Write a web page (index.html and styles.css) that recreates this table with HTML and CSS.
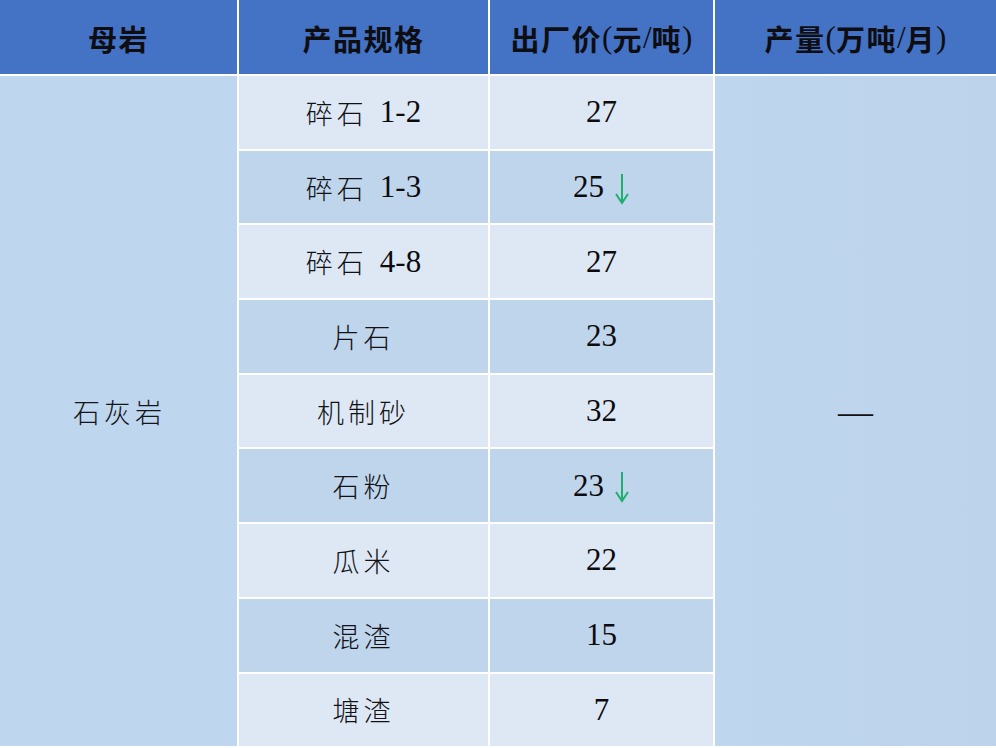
FILE: index.html
```html
<!DOCTYPE html>
<html lang="zh-CN">
<head>
<meta charset="utf-8">
<title>石灰岩价格表</title>
<link rel="stylesheet" href="styles.css">
</head>
<body>
<div class="table">
  <div class="th">母岩</div>
  <div class="th">产品规格</div>
  <div class="th">出厂价<span class="lat">(</span>元<span class="lat">/</span>吨<span class="lat">)</span></div>
  <div class="th">产量<span class="lat">(</span>万吨<span class="lat">/</span>月<span class="lat">)</span></div>

  <div class="side rock">石灰岩</div>

  <div class="td light spec">碎石<span class="num">1-2</span></div>
  <div class="td light price"><span class="num">27</span></div>

  <div class="td dark spec">碎石<span class="num">1-3</span></div>
  <div class="td dark price"><span class="num">25</span><svg class="down" viewBox="0 0 16 32" width="16" height="32"><path d="M8 1 V29" stroke="#1fae6e" stroke-width="2" fill="none"/><path d="M2 21 L8 30 L14 21" stroke="#1fae6e" stroke-width="2" fill="none"/></svg></div>

  <div class="td light spec">碎石<span class="num">4-8</span></div>
  <div class="td light price"><span class="num">27</span></div>

  <div class="td dark spec">片石</div>
  <div class="td dark price"><span class="num">23</span></div>

  <div class="td light spec">机制砂</div>
  <div class="td light price"><span class="num">32</span></div>

  <div class="td dark spec">石粉</div>
  <div class="td dark price"><span class="num">23</span><svg class="down" viewBox="0 0 16 32" width="16" height="32"><path d="M8 1 V29" stroke="#1fae6e" stroke-width="2" fill="none"/><path d="M2 21 L8 30 L14 21" stroke="#1fae6e" stroke-width="2" fill="none"/></svg></div>

  <div class="td light spec">瓜米</div>
  <div class="td light price"><span class="num">22</span></div>

  <div class="td dark spec">混渣</div>
  <div class="td dark price"><span class="num">15</span></div>

  <div class="td light spec">塘渣</div>
  <div class="td light price"><span class="num">7</span></div>

  <div class="side output"><span class="dash">—</span></div>
</div>
</body>
</html>
```

FILE: styles.css
```css
html, body {
  margin: 0;
  padding: 0;
  background: #ffffff;
}

body {
  width: 996px;
  height: 748px;
  overflow: hidden;
}

.table {
  display: grid;
  grid-template-columns: 237px 249px 223px 281px;
  grid-template-rows: 74px repeat(9, 72.7px);
  column-gap: 2px;
  row-gap: 2px;
  width: 996px;
  background: #ffffff;
}

.th {
  background: #4472c4;
  color: #0d0d12;
  font-family: "Noto Sans CJK SC", "Noto Sans", sans-serif;
  font-weight: 700;
  font-size: 29px;
  letter-spacing: 1.5px;
  display: flex;
  align-items: center;
  justify-content: center;
  padding-top: 1px;
}

.th .lat {
  font-family: "Liberation Serif", serif;
  font-weight: 400;
  font-size: 31px;
  letter-spacing: 0;
}

.side {
  grid-row: 2 / span 9;
  display: flex;
  align-items: center;
  justify-content: center;
  background: #bed6ee;
}

.rock {
  grid-column: 1;
  font-family: "Noto Sans CJK SC", sans-serif;
  font-weight: 300;
  font-size: 27px;
  letter-spacing: 4px;
  color: #15151a;
  padding-left: 2px;
}

.output {
  grid-column: 4;
  background: linear-gradient(90deg, #bed6ee 0%, #bdd3ec 100%);
}

.dash {
  font-family: "Liberation Serif", serif;
  font-size: 35px;
  color: #111;
  line-height: 1;
  margin-top: 2px;
}

.td {
  display: flex;
  align-items: center;
  justify-content: center;
  color: #111116;
}

.light {
  background: #dee8f4;
}

.dark {
  background: #bfd5ec;
}

.spec {
  grid-column: 2;
  font-family: "Noto Sans CJK SC", sans-serif;
  font-weight: 300;
  font-size: 27px;
  letter-spacing: 4px;
}

.spec .num {
  margin-left: 12px;
}

.price {
  grid-column: 3;
}

.num {
  font-family: "Liberation Serif", serif;
  font-weight: 400;
  font-size: 31px;
  letter-spacing: 0;
  color: #0b0b0e;
}

.down {
  display: block;
  margin-left: 10px;
  margin-top: 3px;
}
```
